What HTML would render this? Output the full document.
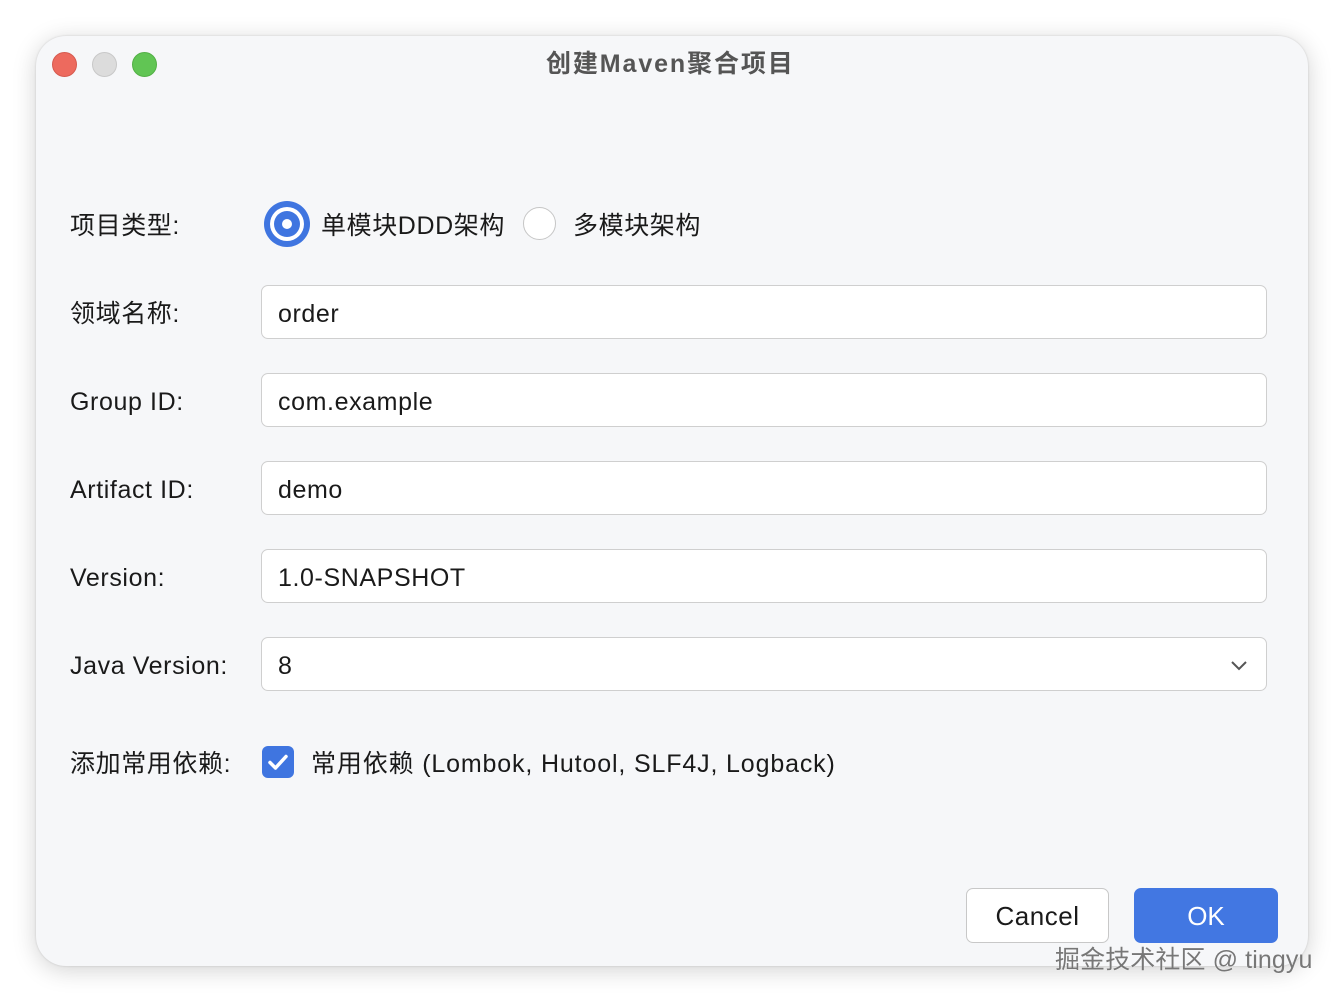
<!DOCTYPE html>
<html><head><style>
body{margin:0;width:1344px;height:1002px;background:#fff;position:relative;overflow:hidden;font-family:"Liberation Sans","Noto Sans CJK SC",sans-serif;color:#1a1a1a}
.win{position:absolute;left:36px;top:36px;width:1272px;height:930px;background:#f6f7f9;border-radius:30px;box-shadow:0 4px 24px rgba(0,0,0,.18),0 0 2px rgba(0,0,0,.15)}
.dot{position:absolute;top:52px;width:24px;height:24px;border-radius:50%}
.t{position:absolute;font-size:25px;line-height:30px;white-space:nowrap;letter-spacing:.6px}
.f{position:absolute;left:261px;width:1004px;height:52px;background:#fff;border:1.5px solid #cfcfcf;border-radius:7px}
.f span{position:absolute;left:16px;top:13px;font-size:25px;line-height:30px;letter-spacing:.6px}
</style></head><body>
<div class="win"></div>
<div class="dot" style="left:52px;background:#ed6a5e;border:1px solid #d65a4f;width:23px;height:23px"></div>
<div class="dot" style="left:92px;background:#dcdcdc;border:1px solid #c8c8c8;width:23px;height:23px"></div>
<div class="dot" style="left:132px;background:#61c554;border:1px solid #52b045;width:23px;height:23px"></div>
<div class="t" style="left:546px;top:49px;color:#555;font-weight:bold;letter-spacing:1.9px">创建Maven聚合项目</div>

<div class="t" style="left:70px;top:211px">项目类型:</div>
<div style="position:absolute;left:264px;top:201px;width:46px;height:46px;border-radius:50%;background:#3f75e0"></div>
<div style="position:absolute;left:270px;top:207px;width:34px;height:34px;border-radius:50%;background:#fff"></div>
<div style="position:absolute;left:274px;top:211px;width:26px;height:26px;border-radius:50%;background:#3f75e0"></div>
<div style="position:absolute;left:282px;top:219px;width:10px;height:10px;border-radius:50%;background:#fff"></div>
<div class="t" style="left:321px;top:211px">单模块DDD架构</div>
<div style="position:absolute;left:523px;top:207px;width:31px;height:31px;border-radius:50%;background:#fff;border:1.5px solid #c6c6c6"></div>
<div class="t" style="left:573px;top:211px">多模块架构</div>

<div class="t" style="left:70px;top:299px">领域名称:</div>
<div class="f" style="top:285px"><span>order</span></div>
<div class="t" style="left:70px;top:387px">Group ID:</div>
<div class="f" style="top:373px"><span>com.example</span></div>
<div class="t" style="left:70px;top:475px">Artifact ID:</div>
<div class="f" style="top:461px"><span>demo</span></div>
<div class="t" style="left:70px;top:563px">Version:</div>
<div class="f" style="top:549px"><span>1.0-SNAPSHOT</span></div>
<div class="t" style="left:70px;top:651px">Java Version:</div>
<div class="f" style="top:637px"><span>8</span>
<svg style="position:absolute;right:18px;top:21px" width="18" height="12" viewBox="0 0 18 12"><path d="M2 3l7 7 7-7" fill="none" stroke="#555" stroke-width="2"/></svg></div>

<div class="t" style="left:70px;top:749px">添加常用依赖:</div>
<div style="position:absolute;left:262px;top:746px;width:32px;height:32px;border-radius:6px;background:#3f75e0">
<svg width="32" height="32" viewBox="0 0 32 32"><path d="M8 16.5l5.5 5.5L24 10.5" fill="none" stroke="#fff" stroke-width="3.5" stroke-linecap="round" stroke-linejoin="round"/></svg></div>
<div class="t" style="left:311px;top:749px;letter-spacing:.85px">常用依赖 (Lombok, Hutool, SLF4J, Logback)</div>

<div style="position:absolute;left:966px;top:888px;width:141px;height:53px;background:#fff;border:1.5px solid #c8c8c8;border-radius:7px;font-size:26px;line-height:55px;text-align:center;letter-spacing:.5px">Cancel</div>
<div style="position:absolute;left:1134px;top:888px;width:144px;height:55px;background:#4277e2;border-radius:7px;font-size:26px;line-height:57px;text-align:center;color:#fff">OK</div>
<div class="t" style="left:1055px;top:945px;font-size:25px;color:#777;text-shadow:0 0 1px #fff;letter-spacing:.1px">掘金技术社区 @ tingyu</div>
</body></html>
